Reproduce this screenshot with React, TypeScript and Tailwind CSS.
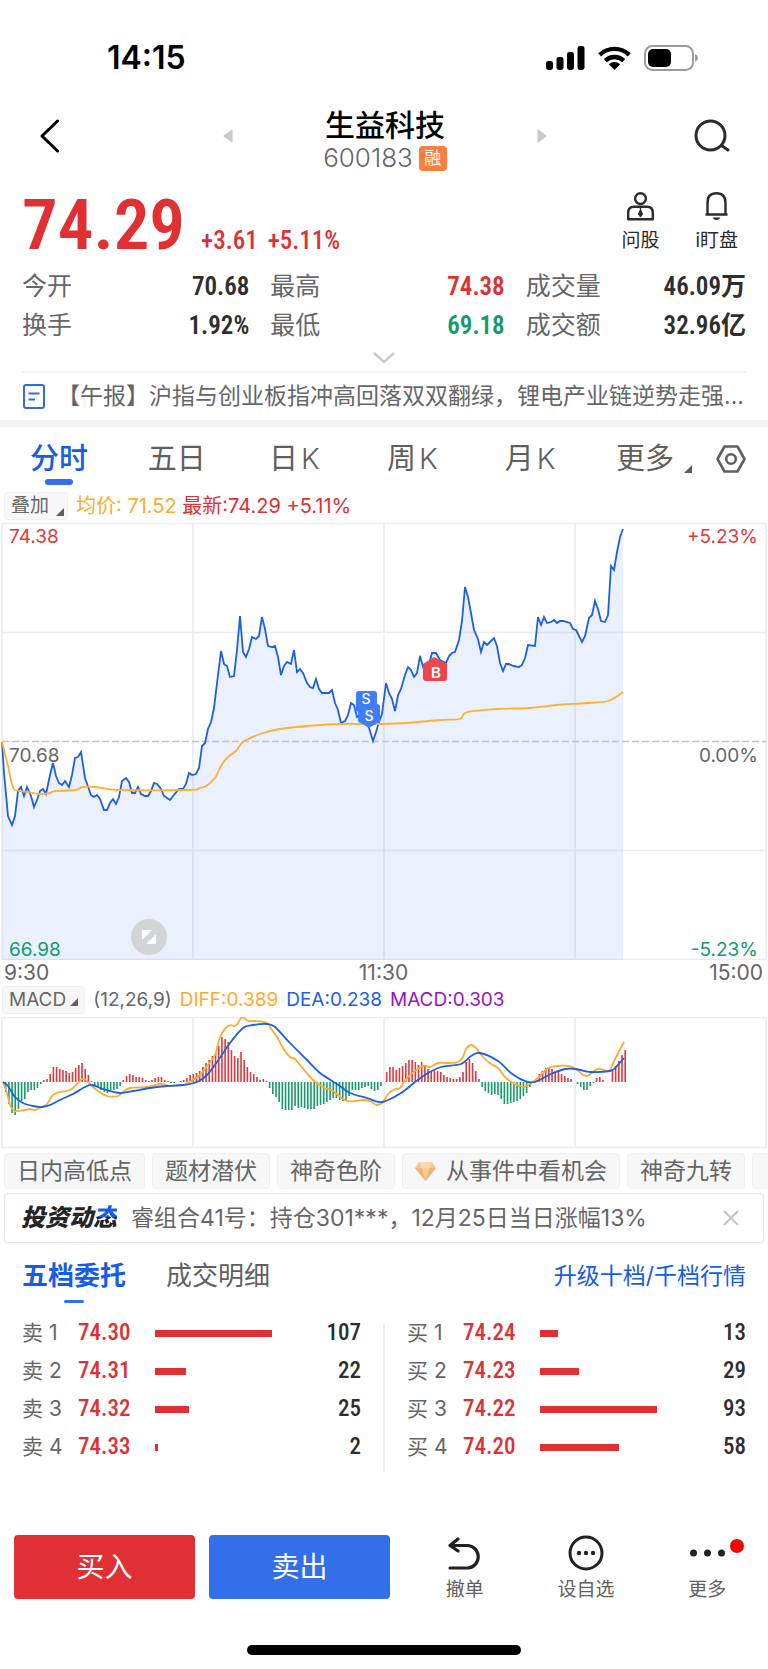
import React from "react";

type Point = [number, number];

const SANS = "font-['Inter','Noto_Sans_CJK_SC',sans-serif]";
const NARROW = "font-['Roboto_Condensed','Liberation_Sans_Narrow','Roboto','Noto_Sans_CJK_SC',sans-serif]";

const PRICE: Point[] = [
  [2, 219], [4, 250], [8, 293], [12, 302], [15, 293], [18, 268], [21, 264], [24, 273], [27, 264], [31, 273],
  [34, 284], [37, 277], [40, 268], [43, 266], [46, 271], [50, 252], [53, 240], [56, 253], [59, 260], [62, 262],
  [65, 258], [69, 264], [72, 252], [75, 235], [78, 234], [81, 229], [85, 255], [91, 272], [94, 274], [97, 272],
  [100, 276], [104, 287], [107, 287], [110, 280], [113, 276], [116, 281], [119, 274], [122, 258], [126, 255],
  [129, 259], [132, 270], [135, 270], [138, 264], [141, 271], [145, 273], [148, 273], [151, 268], [154, 260],
  [157, 261], [161, 266], [164, 273], [170, 277], [173, 273], [179, 266], [183, 266], [186, 261], [189, 250],
  [192, 252], [196, 251], [199, 245], [202, 223], [205, 220], [208, 206], [211, 199], [214, 185], [218, 152],
  [221, 128], [224, 141], [227, 143], [230, 154], [234, 153], [237, 127], [240, 93], [243, 129], [246, 134],
  [249, 126], [252, 114], [256, 116], [259, 113], [262, 94], [265, 106], [268, 123], [272, 124], [275, 123],
  [278, 134], [281, 152], [284, 143], [287, 139], [291, 141], [294, 127], [297, 149], [300, 146], [303, 150],
  [307, 160], [310, 164], [313, 165], [316, 156], [319, 166], [322, 170], [329, 170], [332, 167], [335, 180],
  [338, 187], [341, 200], [345, 198], [348, 192], [351, 180], [354, 182], [357, 194], [360, 192], [364, 194],
  [367, 199], [370, 208], [373, 218], [376, 209], [379, 199], [382, 191], [386, 160], [389, 170], [392, 176],
  [395, 188], [398, 172], [401, 166], [405, 152], [408, 144], [411, 147], [414, 154], [417, 150], [420, 133],
  [424, 147], [428, 145], [432, 130], [436, 130], [440, 137], [446, 140], [449, 133], [452, 130], [455, 129],
  [459, 117], [462, 98], [465, 64], [468, 74], [471, 90], [474, 107], [478, 116], [481, 129], [484, 119],
  [487, 122], [490, 119], [494, 115], [497, 123], [500, 140], [503, 148], [506, 141], [509, 141], [513, 143],
  [519, 144], [522, 142], [525, 135], [528, 122], [535, 123], [538, 94], [541, 102], [544, 94], [547, 100],
  [551, 99], [554, 97], [557, 100], [560, 98], [563, 98], [570, 100], [573, 106], [576, 107], [582, 119],
  [585, 113], [589, 95], [592, 92], [595, 78], [598, 86], [601, 98], [605, 99], [608, 92], [611, 43], [614, 47],
  [617, 29], [620, 14], [623, 6],
];

const AVERAGE: Point[] = [
  [2, 219], [8, 243], [12, 261], [15, 267], [27, 269], [40, 271], [50, 270], [55, 268], [75, 267], [83, 264],
  [95, 264], [120, 267], [190, 267], [199, 265], [206, 263], [215, 255], [221, 243], [227, 235], [236, 228],
  [241, 221], [246, 217], [263, 210], [280, 206], [307, 203], [340, 201], [380, 201], [407, 200], [440, 197],
  [460, 196], [467, 189], [497, 186], [530, 185], [557, 182], [587, 180], [608, 178], [623, 169],
];

const DIFF: Point[] = [
  [3, 65], [7, 76], [10, 88], [15, 94], [25, 93], [30, 92], [35, 93], [42, 90], [47, 87], [53, 78], [60, 75],
  [70, 73], [77, 67], [82, 62], [87, 64], [92, 69], [98, 74], [107, 79], [118, 79], [123, 75], [130, 71],
  [147, 70], [160, 67], [170, 69], [183, 68], [193, 63], [200, 58], [207, 49], [215, 38], [220, 20], [228, 9],
  [235, 9], [238, 6], [241, 1], [244, 1], [248, 4], [255, 4], [267, 6], [272, 13], [277, 20], [283, 31],
  [290, 40], [295, 42], [300, 48], [313, 63], [323, 70], [333, 74], [347, 84], [363, 83], [370, 84], [377, 88],
  [383, 85], [388, 77], [395, 72], [400, 71], [408, 60], [423, 49], [430, 50], [438, 46], [448, 46], [458, 45],
  [463, 40], [466, 32], [471, 28], [476, 31], [483, 40], [491, 47], [498, 51], [505, 60], [515, 67], [524, 70],
  [531, 66], [538, 61], [548, 51], [558, 49], [568, 49], [576, 52], [586, 59], [598, 52], [609, 54], [613, 46],
  [624, 25],
];

const DEA: Point[] = [
  [3, 65], [8, 69], [15, 80], [23, 86], [33, 89], [42, 90], [50, 88], [62, 82], [73, 77], [85, 70], [92, 68],
  [103, 72], [120, 76], [133, 74], [150, 71], [167, 69], [183, 68], [197, 65], [207, 58], [217, 45], [230, 26],
  [243, 11], [253, 8], [267, 7], [275, 10], [290, 26], [307, 43], [320, 56], [337, 67], [350, 76], [367, 81],
  [382, 85], [401, 76], [415, 65], [428, 56], [441, 50], [461, 47], [471, 39], [480, 36], [498, 44], [511, 56],
  [525, 64], [535, 65], [551, 57], [565, 52], [576, 52], [591, 55], [610, 54], [616, 50], [624, 41],
];

const MORNING = [
  -10, -22, -31, -33, -27, -19, -17, -10, -8, -8, -6, -2, 2, 3, 8, 15, 15, 13, 12, 11, 9, 10, 14, 17, 19, 13, 7, 1,
  -4, -5, -8, -10, -11, -8, -8, -7, -4, 2, 6, 8, 7, 5, 5, 4, 2, 1, 2, 4, 5, 5, 2, 1, -1, -1, 0, 1, 2, 4, 7, 8, 9, 11,
  15, 19, 22, 26, 29, 36, 45, 43, 40, 32, 26, 24, 30, 22, 15, 10, 8, 5, 2, 3, 1, -6, -12, -15, -20, -27, -28, -28,
  -28, -24, -26, -25, -26, -27, -27, -27, -24, -23, -22, -20, -18, -16, -16, -18, -19, -18, -14, -8, -8, -8, -6, -5,
  -4, -7, -9, -8, -4,
];

const AFTERNOON = [
  10, 15, 15, 12, 14, 16, 19, 22, 22, 20, 17, 20, 17, 13, 11, 12, 11, 10, 7, 5, 4, 3, 3, 5, 10, 20, 23, 19, 11, 3,
  -5, -9, -11, -13, -12, -13, -17, -22, -22, -21, -20, -19, -17, -14, -11, -5, -1, 2, 8, 11, 14, 14, 13, 11, 10, 8,
  6, 4, 3, 0, -2, -5, -8, -8, -4, -1, 4, 5, 2, 0, 0, 11, 16, 21, 27, 32,
];

const STEP = 3.18;

function line(points: Point[]): string {
  return points.map(([x, y], i) => `${i ? "L" : "M"}${x} ${y}`).join("");
}

function curve(points: Point[]): string {
  let d = `M${points[0][0]} ${points[0][1]}`;
  for (let i = 0; i < points.length - 1; i++) {
    const p0 = points[Math.max(0, i - 1)];
    const p1 = points[i];
    const p2 = points[i + 1];
    const p3 = points[Math.min(points.length - 1, i + 2)];
    const c = [p1[0] + (p2[0] - p0[0]) / 6, p1[1] + (p2[1] - p0[1]) / 6, p2[0] - (p3[0] - p1[0]) / 6, p2[1] - (p3[1] - p1[1]) / 6];
    d += `C${c.map((v) => v.toFixed(1)).join(" ")} ${p2[0]} ${p2[1]}`;
  }
  return d;
}

function StatusBar() {
  return (
    <div className="flex h-[90px] items-end justify-between pr-[70px] pb-4 pl-[107px]">
      <span className="text-[32px] leading-8 font-semibold">14:15</span>
      <div className="flex h-8 items-center gap-[13px]">
        <svg className="h-6 w-[39px]" viewBox="0 0 39 24" aria-label="signal">
          <rect x="0" y="15" width="7" height="9" rx="2.4" />
          <rect x="10.5" y="11" width="7" height="13" rx="2.4" />
          <rect x="21" y="6" width="7" height="18" rx="2.4" />
          <rect x="31.500" y="0" width="7" height="24" rx="2.4" />
        </svg>
        <svg className="h-6 w-[33px]" viewBox="0 0 33 24" aria-label="wifi">
          <g fill="none" stroke="#000" strokeWidth="4.400">
            <path d="M1.700 8.800A21.500 21.500 0 0 1 31.300 8.800" />
            <path d="M7.300 14.600A13.400 13.400 0 0 1 25.700 14.600" />
          </g>
          <path d="M16.500 24L10.800 18.300A8.200 8.200 0 0 1 22.200 18.300Z" />
        </svg>
        <svg className="h-[26px] w-[54px]" viewBox="0 0 54 26" aria-label="battery">
          <rect x="1" y="1" width="48" height="24" rx="7.500" fill="none" stroke="#9b9b9b" strokeWidth="2" />
          <path d="M51 9v8q3-1.300 3-4t-3-4Z" fill="#9b9b9b" />
          <rect x="4" y="4" width="23" height="18" rx="5" />
        </svg>
      </div>
    </div>
  );
}

function Header() {
  return (
    <header className="flex h-[92px] items-center justify-between pr-[38px] pl-10">
      <button aria-label="返回" className="w-9">
        <svg className="h-[34px] w-5" viewBox="0 0 20 34" fill="none" stroke="#000" strokeWidth="3" strokeLinecap="round" strokeLinejoin="round">
          <path d="M17.500 2L2 17L17.500 32" />
        </svg>
      </button>
      <div className="flex w-[324px] items-center justify-between">
        <button aria-label="上一只">
          <svg className="h-[14px] w-[10px]" viewBox="0 0 10 14" fill="#c9c9c9"><path d="M9.500 0V14L0 7Z" /></svg>
        </button>
        <div className="flex flex-col items-center pt-[10px]">
          <h1 className="text-[30px] leading-[34px] font-medium">生益科技</h1>
          <div className="flex items-center gap-[6px]">
            <span className="text-[26px] leading-8 font-light text-[#666]">600183</span>
            <span className="flex h-[25px] w-7 items-center justify-center rounded-[4px] bg-[#ff7e3e] text-[17px] leading-5 text-white">融</span>
          </div>
        </div>
        <button aria-label="下一只">
          <svg className="h-[14px] w-[10px]" viewBox="0 0 10 14" fill="#c9c9c9"><path d="M0.500 0V14L10 7Z" /></svg>
        </button>
      </div>
      <button aria-label="搜索">
        <svg className="h-[34px] w-9" viewBox="0 0 36 34" fill="none" stroke="#2b2b2b" strokeWidth="3" strokeLinecap="round">
          <circle cx="16.500" cy="16.500" r="14.500" />
          <path d="M27.500 26.500L34 31" />
        </svg>
      </button>
    </header>
  );
}

function Quote() {
  return (
    <section className="flex h-[85px] items-end justify-between pr-[30px] pb-2 pl-[22px]">
      <div className={`${NARROW} flex items-baseline text-[#e03034]`}>
        <span className="text-[71px] leading-[68px] font-semibold">74.29</span>
        <span className="ml-4 text-[25px] font-medium">+3.61</span>
        <span className="ml-[10px] text-[25px] font-medium">+5.11%</span>
      </div>
      <div className="flex gap-9 pb-[6px]">
        <button className="flex flex-col items-center gap-2">
          <svg className="h-[29px] w-[27px]" viewBox="0 0 27 29" fill="none" stroke="#2b2b2b" strokeWidth="2.400" strokeLinejoin="round">
            <circle cx="13.500" cy="6.600" r="5.400" />
            <path d="M1.200 27.300V21Q1.200 14.800 7 14.800H20Q25.800 14.800 25.800 21V27.300Z" />
            <path d="M13.500 15V18M13.500 18L15.300 22L13.500 24.500L11.700 22Z" fill="#2b2b2b" strokeWidth="1.400" />
          </svg>
          <span className="text-[19px] leading-6 text-[#2b2b2b]">问股</span>
        </button>
        <button className="flex flex-col items-center gap-2">
          <svg className="h-[29px] w-[23px]" viewBox="0 0 23 29" fill="none" stroke="#2b2b2b" strokeWidth="2.400" strokeLinejoin="round">
            <path d="M2.500 22.500V11Q2.500 1.300 11.500 1.300T20.500 11V22.500M0.500 22.500H22.500" />
            <path d="M7.500 25.500H15.500Q14 28 11.500 28T7.500 25.500Z" fill="#2b2b2b" stroke="none" />
          </svg>
          <span className="text-[19px] leading-6 text-[#2b2b2b]">i盯盘</span>
        </button>
      </div>
    </section>
  );
}

function Stat({ label, value, tone }: { label: string; value: string; tone: string }) {
  return (
    <div className="flex items-center justify-between">
      <dt className="text-[25px] text-[#666]">{label}</dt>
      <dd className={`${NARROW} text-[25px] font-semibold ${tone}`}>{value}</dd>
    </div>
  );
}

function Stats() {
  const dark = "text-[#2e2e2e]";
  return (
    <section className="px-[22px]">
      <dl className="grid grid-cols-[227fr_234fr_220fr] gap-x-[21px] leading-[39px]">
        <Stat label="今开" value="70.68" tone={dark} />
        <Stat label="最高" value="74.38" tone="text-[#e03034]" />
        <Stat label="成交量" value="46.09万" tone={dark} />
        <Stat label="换手" value="1.92%" tone={dark} />
        <Stat label="最低" value="69.18" tone="text-[#119c68]" />
        <Stat label="成交额" value="32.96亿" tone={dark} />
      </dl>
      <button aria-label="展开" className="flex h-[26px] w-full items-center justify-center">
        <svg className="h-3 w-[22px]" viewBox="0 0 22 12" fill="none" stroke="#c8c8c8" strokeWidth="2.400"><path d="M1 1L11 10L21 1" /></svg>
      </button>
      <a href="#news" className="flex h-[49px] items-center border-t-2 border-[#f4f4f4] text-[23px] whitespace-nowrap text-[#666]">
        <svg className="mr-3 ml-px h-[25px] w-[22px] shrink-0" viewBox="0 0 22 25" fill="none" stroke="#2f6be6" strokeWidth="2">
          <rect x="1" y="1" width="20" height="23" rx="2" />
          <path d="M5.500 9.500H16.500M5.500 15.500H12" strokeWidth="2.200" />
        </svg>
        <span className="min-w-0 overflow-hidden">【午报】沪指与创业板指冲高回落双双翻绿，锂电产业链逆势走强...</span>
      </a>
    </section>
  );
}

function Corner({ className }: { className: string }) {
  return <svg className={className} viewBox="0 0 8 8" fill="#5f5f5f" aria-hidden="true"><path d="M8 0V8H0Z" /></svg>;
}

function PeriodTabs() {
  const candle = "flex justify-center gap-[3px]";
  return (
    <nav className="flex h-[62px] items-start pt-3 pr-[22px] text-[29px] leading-10 text-[#5f5f5f]">
      <div className="grid flex-1 grid-cols-5">
        <button className="flex flex-col items-center font-medium text-[#155ce8]">
          分时
          <span className="h-[6px] w-7 rounded-full bg-[#3370e8]" />
        </button>
        <button className="self-start">五日</button>
        <button className={candle}>日<span className="font-light">K</span></button>
        <button className={candle}>周<span className="font-light">K</span></button>
        <button className={candle}>月<span className="font-light">K</span></button>
      </div>
      <div className="ml-[27px] flex items-center gap-6">
        <button className="flex items-end gap-[10px]">更多<Corner className="mb-[6px] h-2 w-2" /></button>
        <button aria-label="设置">
          <svg className="h-7 w-[30px]" viewBox="0 0 30 28" fill="none" stroke="#5f5f5f" strokeWidth="2.600" strokeLinejoin="round">
            <path d="M8.500 1.500H21.500L28.500 14L21.500 26.500H8.500L1.500 14Z" />
            <circle cx="15" cy="14" r="4.800" />
          </svg>
        </button>
      </div>
    </nav>
  );
}

const CHIP = "border border-[#f0f0f0] bg-[#f7f7f7] rounded-[4px] text-[#666]";

function Grid({ height }: { height: number }) {
  return (
    <g stroke="#ececee" strokeWidth="1.600" fill="none">
      <rect x="2" y="0.500" width="764" height={height - 1} />
      <path d={`M193 0V${height}M384 0V${height}M575 0V${height}`} />
    </g>
  );
}

function PriceChart() {
  return (
    <div className="relative text-[19px] leading-5">
      <svg className="block w-full" viewBox="0 0 768 437" role="img" aria-label="分时走势">
        <Grid height={437} />
        <path d="M2 109.500H766M2 327.500H766" stroke="#ececee" strokeWidth="1.600" />
        <path d={`${line(PRICE)}V437H2Z`} fill="#326fe8" fillOpacity="0.100" />
        <path d="M2 218.500H766" stroke="#c4c4c8" strokeWidth="1.600" strokeDasharray="7 3" />
        <path d={line(PRICE)} fill="none" stroke="#1a5fe6" strokeWidth="1.800" strokeLinejoin="miter" />
        <path d={curve(AVERAGE)} fill="none" stroke="#ffb02e" strokeWidth="1.800" />
        <path d="M423 141L434 134L447 141V155Q447 158 444 158H426Q423 158 423 155Z" fill="#ef454c" />
        <rect x="356" y="168" width="21" height="21" rx="3" fill="#3f7dfb" />
        <path d="M361 181H377Q380 181 380 184V197Q380 200 377 200L369 205L361 200Q358 200 358 197V184Q358 181 361 181Z" fill="#3f7dfb" />
        <text x="366" y="181" textAnchor="middle" fontSize="14" fontWeight="500" fill="#fff" className={SANS}>S</text>
        <text x="369" y="198" textAnchor="middle" fontSize="14" fontWeight="500" fill="#fff" className={SANS}>S</text>
        <text x="436" y="155" textAnchor="middle" fontSize="15" fontWeight="600" fill="#fff" className={SANS}>B</text>
      </svg>
      <span className="absolute top-1 left-[9px] text-[#e0393d]">74.38</span>
      <span className="absolute top-1 right-[10px] text-[#e0393d]">+5.23%</span>
      <span className="absolute top-1/2 left-[9px] mt-1 text-[#666]">70.68</span>
      <span className="absolute top-1/2 right-[10px] mt-1 text-[#666]">0.00%</span>
      <span className="absolute bottom-0 left-[9px] text-[#119c68]">66.98</span>
      <span className="absolute right-[10px] bottom-0 text-[#119c68]">-5.23%</span>
      <button aria-label="全屏" className="absolute bottom-[5px] left-[131px] flex size-9 items-center justify-center rounded-full bg-[#d3d4d6]">
        <svg className="size-4" viewBox="0 0 16 16" fill="#fff"><path d="M1 1H11L1 11ZM15 5V15H5Z" /></svg>
      </button>
    </div>
  );
}

function Bars({ data, start }: { data: number[]; start: number }) {
  return (
    <>
      {data.map((v, i) =>
        v === 0 ? null : (
          <rect key={i} x={start + i * STEP - 0.8} y={v > 0 ? 65 - v : 65} width="1.600" height={Math.abs(v)} fill={v > 0 ? "#e0383c" : "#169c69"} />
        ),
      )}
    </>
  );
}

function Charts() {
  return (
    <section>
      <div className="flex h-[34px] items-start gap-2 px-1 pt-[3px] text-[19px] leading-7">
        <button className={`${CHIP} flex h-7 w-16 items-center justify-between pr-[3px] pl-[6px]`}>
          叠加<Corner className="mt-3 h-2 w-2" />
        </button>
        <p className="text-[20px] text-[#e03034]"><span className="text-[#faad2b]">均价: 71.52</span> 最新:74.29 +5.11%</p>
      </div>
      <PriceChart />
      <div className="grid h-[26px] grid-cols-3 items-center pr-[5px] pl-1 text-[21px] leading-6 text-[#666]">
        <span>9:30</span>
        <span className="text-center">11:30</span>
        <span className="text-right">15:00</span>
      </div>
      <div className="flex h-[31px] items-start gap-2 px-[2px] text-[19px] leading-7">
        <button className={`${CHIP} flex h-7 items-center gap-1 px-[6px]`}>
          MACD<Corner className="mt-1 h-2 w-2" />
        </button>
        <span className="text-[#666]">(12,26,9)</span>
        <span className="text-[#ffab2e]">DIFF:0.389</span>
        <span className="text-[#1a5fe6]">DEA:0.238</span>
        <span className="text-[#9713c9]">MACD:0.303</span>
      </div>
      <svg className="block w-full" viewBox="0 0 768 131" role="img" aria-label="MACD">
        <Grid height={131} />
        <Bars data={MORNING} start={5.7} />
        <Bars data={AFTERNOON} start={386.7} />
        <path d={curve(DIFF)} fill="none" stroke="#ffab2e" strokeWidth="1.800" />
        <path d={curve(DEA)} fill="none" stroke="#1a5fe6" strokeWidth="1.800" />
      </svg>
    </section>
  );
}

function Tools() {
  const chip = `${CHIP} flex h-9 shrink-0 items-center px-3`;
  return (
    <div className="mt-[5px] flex gap-[7px] overflow-hidden pl-1 text-[23px] whitespace-nowrap">
      <button className={chip}>日内高低点</button>
      <button className={chip}>题材潜伏</button>
      <button className={chip}>神奇色阶</button>
      <button className={`${chip} gap-[10px]`}>
        <svg className="h-[19px] w-[21px]" viewBox="0 0 21 19">
          <path d="M4 0H17L21 6L10.500 19L0 6Z" fill="#f6c48c" />
          <path d="M4 0H17L14.500 6H6.500Z" fill="#fad9ae" />
          <path d="M0 6H21L10.500 19Z" fill="#efb377" />
          <path d="M6.500 6H14.500L10.500 19Z" fill="#f7ca96" />
        </svg>
        从事件中看机会
      </button>
      <button className={chip}>神奇九转</button>
      <span className={`${CHIP} h-9 w-10 shrink-0`} />
    </div>
  );
}

function Notice() {
  return (
    <div className="mx-1 mt-1 flex h-[50px] items-center rounded-[4px] border border-[#e6e6e6] pr-6 pl-4 text-[23px] text-[#666] shadow-xs">
      <strong className="mr-[14px] text-[24px] font-black text-[#252525] italic">
        投资动<span className="bg-linear-to-b from-[#155ce8] from-50% to-[#252525] to-50% bg-clip-text text-transparent">态</span>
      </strong>
      <span className="min-w-0 flex-1 truncate">睿组合41号：持仓301***，12月25日当日涨幅13%</span>
      <button aria-label="关闭">
        <svg className="size-4" viewBox="0 0 16 16" stroke="#c4c4c4" strokeWidth="2"><path d="M1 1L15 15M15 1L1 15" /></svg>
      </button>
    </div>
  );
}

type Order = { name: string; price: string; width: string; volume: number };

const SELLS: Order[] = [
  { name: "卖 1", price: "74.30", width: "w-[72%]", volume: 107 },
  { name: "卖 2", price: "74.31", width: "w-[19%]", volume: 22 },
  { name: "卖 3", price: "74.32", width: "w-[21%]", volume: 25 },
  { name: "卖 4", price: "74.33", width: "w-[2%]", volume: 2 },
];

const BUYS: Order[] = [
  { name: "买 1", price: "74.24", width: "w-[11%]", volume: 13 },
  { name: "买 2", price: "74.23", width: "w-[24%]", volume: 29 },
  { name: "买 3", price: "74.22", width: "w-[72%]", volume: 93 },
  { name: "买 4", price: "74.20", width: "w-[49%]", volume: 58 },
];

function Orders({ rows, label }: { rows: Order[]; label: string }) {
  return (
    <table className="w-full table-fixed border-collapse self-start" aria-label={label}>
      <colgroup>
        <col className="w-14" />
        <col className="w-[77px]" />
        <col />
        <col className="w-11" />
      </colgroup>
      <tbody>
        {rows.map((row) => (
          <tr key={row.name} className="h-[38px] leading-7">
            <th scope="row" className="p-0 text-left text-[21px] font-normal whitespace-nowrap text-[#666]">{row.name}</th>
            <td className={`${NARROW} p-0 text-[23px] font-medium text-[#e03034]`}>{row.price}</td>
            <td className="p-0"><div className={`h-[7px] bg-[#e03034] ${row.width}`} /></td>
            <td className={`${NARROW} p-0 text-right text-[23px] font-medium text-[#2e2e2e]`}>{row.volume}</td>
          </tr>
        ))}
      </tbody>
    </table>
  );
}

function Book() {
  return (
    <section className="px-[22px]">
      <div className="flex h-[71px] items-start justify-between pt-[13px] text-[26px] leading-10">
        <div className="flex gap-10">
          <button className="flex flex-col items-center gap-1 font-bold text-[#155ce8]">
            五档委托
            <span className="h-[3px] w-5 rounded-full bg-[#3370e8]" />
          </button>
          <button className="self-start text-[#5f5f5f]">成交明细</button>
        </div>
        <a href="#level2" className="text-[23px] text-[#155ce8]">升级十档/千档行情</a>
      </div>
      <div className="grid grid-cols-[1fr_2px_1fr] gap-x-[22px]">
        <Orders rows={SELLS} label="卖盘" />
        <div className="mt-[10px] h-[148px] bg-[#ececec]" />
        <Orders rows={BUYS} label="买盘" />
      </div>
    </section>
  );
}

function BottomBar() {
  return (
    <footer className="mt-[63px]">
      <div className="flex h-16 pl-[14px]">
        <button className="w-[181px] rounded-[4px] bg-[#e03034] text-[28px] text-white">买入</button>
        <button className="ml-[14px] w-[181px] rounded-[4px] bg-[#326fe8] text-[28px] text-white">卖出</button>
        <div className="grid flex-1 grid-cols-3 pl-[14px] text-[19px] leading-[18px] text-[#5f5f5f]">
          <button className="flex flex-col items-center justify-between">
            <svg className="h-9 w-[34px]" viewBox="0 0 34 36" fill="none" stroke="#222" strokeWidth="3.200" strokeLinecap="round" strokeLinejoin="round">
              <path d="M10 4L2 10.500L10 16M2.500 10.500H20A11.300 11.300 0 0 1 20 33H2" />
            </svg>
            撤单
          </button>
          <button className="flex flex-col items-center justify-between">
            <svg className="h-9 w-9" viewBox="0 0 36 36" fill="#222">
              <circle cx="18" cy="18" r="16" fill="none" stroke="#222" strokeWidth="3" />
              <circle cx="11" cy="18" r="2.200" /><circle cx="18" cy="18" r="2.200" /><circle cx="25" cy="18" r="2.200" />
            </svg>
            设自选
          </button>
          <button className="relative flex flex-col items-center justify-between">
            <svg className="h-9 w-[35px]" viewBox="0 0 35 36" fill="#222">
              <circle cx="3.500" cy="18" r="3.500" /><circle cx="17.500" cy="18" r="3.500" /><circle cx="31.500" cy="18" r="3.500" />
            </svg>
            更多
            <span className="absolute top-1 left-1/2 ml-[23px] size-[14px] rounded-full bg-[#ff0000]" />
          </button>
        </div>
      </div>
      <div className="mx-auto mt-[46px] mb-[14px] h-[10px] w-[274px] rounded-full bg-black" />
    </footer>
  );
}

export default function App() {
  return (
    <main className={`${SANS} overflow-hidden bg-white text-black`}>
      <StatusBar />
      <Header />
      <Quote />
      <Stats />
      <div className="h-[7px] bg-[#f4f4f4]" />
      <PeriodTabs />
      <Charts />
      <Tools />
      <Notice />
      <Book />
      <BottomBar />
    </main>
  );
}
